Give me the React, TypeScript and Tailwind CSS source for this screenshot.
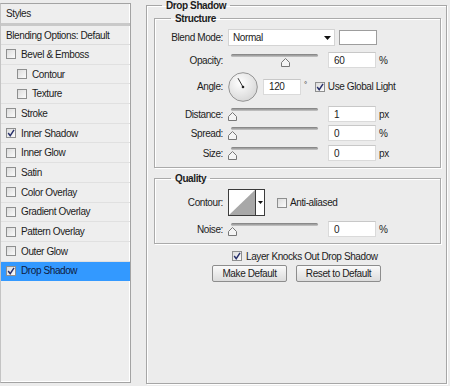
import React from "react";

const styleRows: { label: string; indent?: boolean; checked?: boolean; selected?: boolean }[] = [
  { label: "Bevel & Emboss" },
  { label: "Contour", indent: true },
  { label: "Texture", indent: true },
  { label: "Stroke" },
  { label: "Inner Shadow", checked: true },
  { label: "Inner Glow" },
  { label: "Satin" },
  { label: "Color Overlay" },
  { label: "Gradient Overlay" },
  { label: "Pattern Overlay" },
  { label: "Outer Glow" },
  { label: "Drop Shadow", checked: true, selected: true },
];

const CheckBox = ({ checked }: { checked?: boolean }) => (
  <span className="relative flex w-[10px] h-[10px] shrink-0 border border-[#8e8f8f] bg-gradient-to-br from-[#dcdcdc] to-[#fbfbfb]">
    {checked && (
      <svg viewBox="0 0 10 10" className="absolute left-0 top-0 w-[8px] h-[8px]">
        <path d="M1.5 5 L4 8.4 L8.8 1" fill="none" stroke="#27306b" strokeWidth="1.8" />
      </svg>
    )}
  </span>
);

const Slider = ({ pos }: { pos: number }) => (
  <div className="relative w-[93px] h-[16px] px-[3px]">
    <div className="mt-[4px] h-[3px] rounded-full bg-gradient-to-b from-[#7d7d7d] to-[#c9c9c9]" />
    <svg viewBox="0 0 9 9" className="absolute top-[4px] w-[9px] h-[9px]" style={{ left: pos }}>
      <path d="M4.5 0.5 L8.5 4.5 L8.5 8.5 L0.5 8.5 L0.5 4.5 Z" fill="#f4f4f4" stroke="#777" strokeWidth="1" />
    </svg>
  </div>
);

const NumBox = ({ value, w = "w-[48px]" }: { value: string; w?: string }) => (
  <div className={`${w} h-[16px] flex items-center pl-[5px] bg-white border border-[#dadada] border-t-[#c8c8c8]`}>{value}</div>
);

const Label = ({ text }: { text: string }) => <span className="w-[68px] text-right shrink-0">{text}</span>;

const SliderRow = ({ label, pos, value, unit, className }: { label: string; pos: number; value: string; unit: string; className: string }) => (
  <div className={`flex items-center h-[16px] ${className}`}>
    <Label text={label} />
    <div className="ml-[5px]">
      <Slider pos={pos} />
    </div>
    <div className="ml-[7px]">
      <NumBox value={value} />
    </div>
    <span className="ml-[3px]">{unit}</span>
  </div>
);

const Group = ({ title, className, children }: { title: string; className: string; children: React.ReactNode }) => (
  <fieldset className={`border border-[#aaaaaa] shadow-[inset_1px_1px_0_#fff,1px_1px_0_#fff] ${className}`}>
    <legend className="ml-[16px] px-[4px] font-bold leading-[11px]">{title}</legend>
    {children}
  </fieldset>
);

export default function App() {
  return (
    <div className="w-[450px] h-[386px] overflow-hidden bg-[#ececec] flex pt-[3px] font-['Liberation_Sans',Arial,sans-serif] text-[10px] tracking-[-0.4px] text-[#1c1c1c]">
      {/* styles list */}
      <div className="w-[131px] h-[380px] shrink-0 flex flex-col border border-[#a3a3a3] border-l-[#c4c4c4] bg-[#eeeeee] shadow-[inset_-1px_-1px_0_#fff]">
        <div className="h-[19px] flex items-center pl-[5px]">Styles</div>
        <div className="h-[3px] bg-[#c9c9c9]" />
        <div className="h-[19px] flex items-center pl-[5px] border-b border-[#dcdcdc]">Blending Options: Default</div>
        {styleRows.map((r) => (
          <div
            key={r.label}
            className={`h-[19.7px] flex items-center gap-[5px] border-b ${r.selected ? "bg-[#3399ff] border-[#3399ff] text-[#0d1a40]" : "border-[#e0e0e0]"} ${r.indent ? "pl-[16px]" : "pl-[5px]"}`}
          >
            <CheckBox checked={r.checked} />
            <span>{r.label}</span>
          </div>
        ))}
      </div>

      {/* settings */}
      <fieldset className="ml-[15px] mt-[-3px] w-[301px] h-[384px] border border-[#a6a6a6] shadow-[inset_1px_1px_0_#fff,1px_1px_0_#fff]">
        <legend className="ml-[15px] px-[4px] font-bold leading-[11px]">Drop Shadow</legend>

        <Group title="Structure" className="mt-[2px] ml-[7px] mr-[5px] pb-[6px]">
          <div className="flex items-center h-[17px] mt-[5px]">
            <Label text="Blend Mode:" />
            <div className="ml-[5px] w-[107px] h-[17px] flex items-center justify-between pl-[4px] pr-[3px] bg-white border border-[#d4d4d4]">
              <span>Normal</span>
              <svg viewBox="0 0 7 4" className="w-[7px] h-[4px]">
                <path d="M0 0 H7 L3.5 4 Z" fill="#111" />
              </svg>
            </div>
            <div className="ml-[4px] w-[38px] h-[15px] bg-white border border-[#9d9d9d]" />
          </div>

          <SliderRow label="Opacity:" pos={53} value="60" unit="%" className="mt-[6px]" />

          <div className="flex items-center h-[29px] mt-[4px]">
            <Label text="Angle:" />
            <svg viewBox="0 0 30 30" className="ml-[5px] w-[30px] h-[30px]">
              <defs>
                <radialGradient id="dial" cx="0.4" cy="0.35" r="0.7">
                  <stop offset="0" stopColor="#ffffff" />
                  <stop offset="1" stopColor="#d6d6d6" />
                </radialGradient>
              </defs>
              <circle cx="15" cy="15" r="14.3" fill="url(#dial)" stroke="#8b8b8b" strokeWidth="0.9" />
              <line x1="15" y1="15" x2="10" y2="6.2" stroke="#333" strokeWidth="1" />
              <circle cx="15" cy="15" r="1.3" fill="#222" />
            </svg>
            <div className="ml-[5px]">
              <NumBox value="120" w="w-[38px]" />
            </div>
            <span className="ml-[3px] -mt-[3px] text-[8px]">°</span>
            <div className="ml-[8px] flex items-center gap-[3px]">
              <CheckBox checked />
              <span>Use Global Light</span>
            </div>
          </div>

          <SliderRow label="Distance:" pos={0} value="1" unit="px" className="mt-[5px]" />
          <SliderRow label="Spread:" pos={0} value="0" unit="%" className="mt-[3px]" />
          <SliderRow label="Size:" pos={0} value="0" unit="px" className="mt-[4px]" />
        </Group>

        <Group title="Quality" className="mt-[5px] ml-[7px] mr-[5px] pb-[6px]">
          <div className="flex items-center mt-[5px]">
            <Label text="Contour:" />
            <div className="ml-[5px] flex h-[27px] border border-[#3c3c3c] bg-white">
              <svg viewBox="0 0 26 25" className="w-[26px] h-[25px]" preserveAspectRatio="none">
                <path d="M0 25 L26 0 L26 25 Z" fill="#a8a8a8" />
              </svg>
              <div className="w-[9px] flex items-center justify-center border-l border-[#3c3c3c]">
                <svg viewBox="0 0 5 3" className="w-[5px] h-[3px]">
                  <path d="M0 0 H5 L2.5 3 Z" fill="#111" />
                </svg>
              </div>
            </div>
            <div className="ml-[12px] flex items-center gap-[3px]">
              <CheckBox />
              <span>Anti-aliased</span>
            </div>
          </div>
          <SliderRow label="Noise:" pos={0} value="0" unit="%" className="mt-[5px]" />
        </Group>

        <div className="mt-[6px] pl-[85px] flex items-center gap-[4px] h-[12px]">
          <CheckBox checked />
          <span>Layer Knocks Out Drop Shadow</span>
        </div>

        <div className="mt-[3px] pl-[65px] flex gap-[9px]">
          <button className="w-[75px] h-[17px] rounded-[2px] border border-[#8d8d8d] bg-gradient-to-b from-[#fafafa] to-[#dcdcdc] tracking-[-0.4px]">
            Make Default
          </button>
          <button className="w-[85px] h-[17px] rounded-[2px] border border-[#8d8d8d] bg-gradient-to-b from-[#fafafa] to-[#dcdcdc] tracking-[-0.4px]">
            Reset to Default
          </button>
        </div>
      </fieldset>
    </div>
  );
}
